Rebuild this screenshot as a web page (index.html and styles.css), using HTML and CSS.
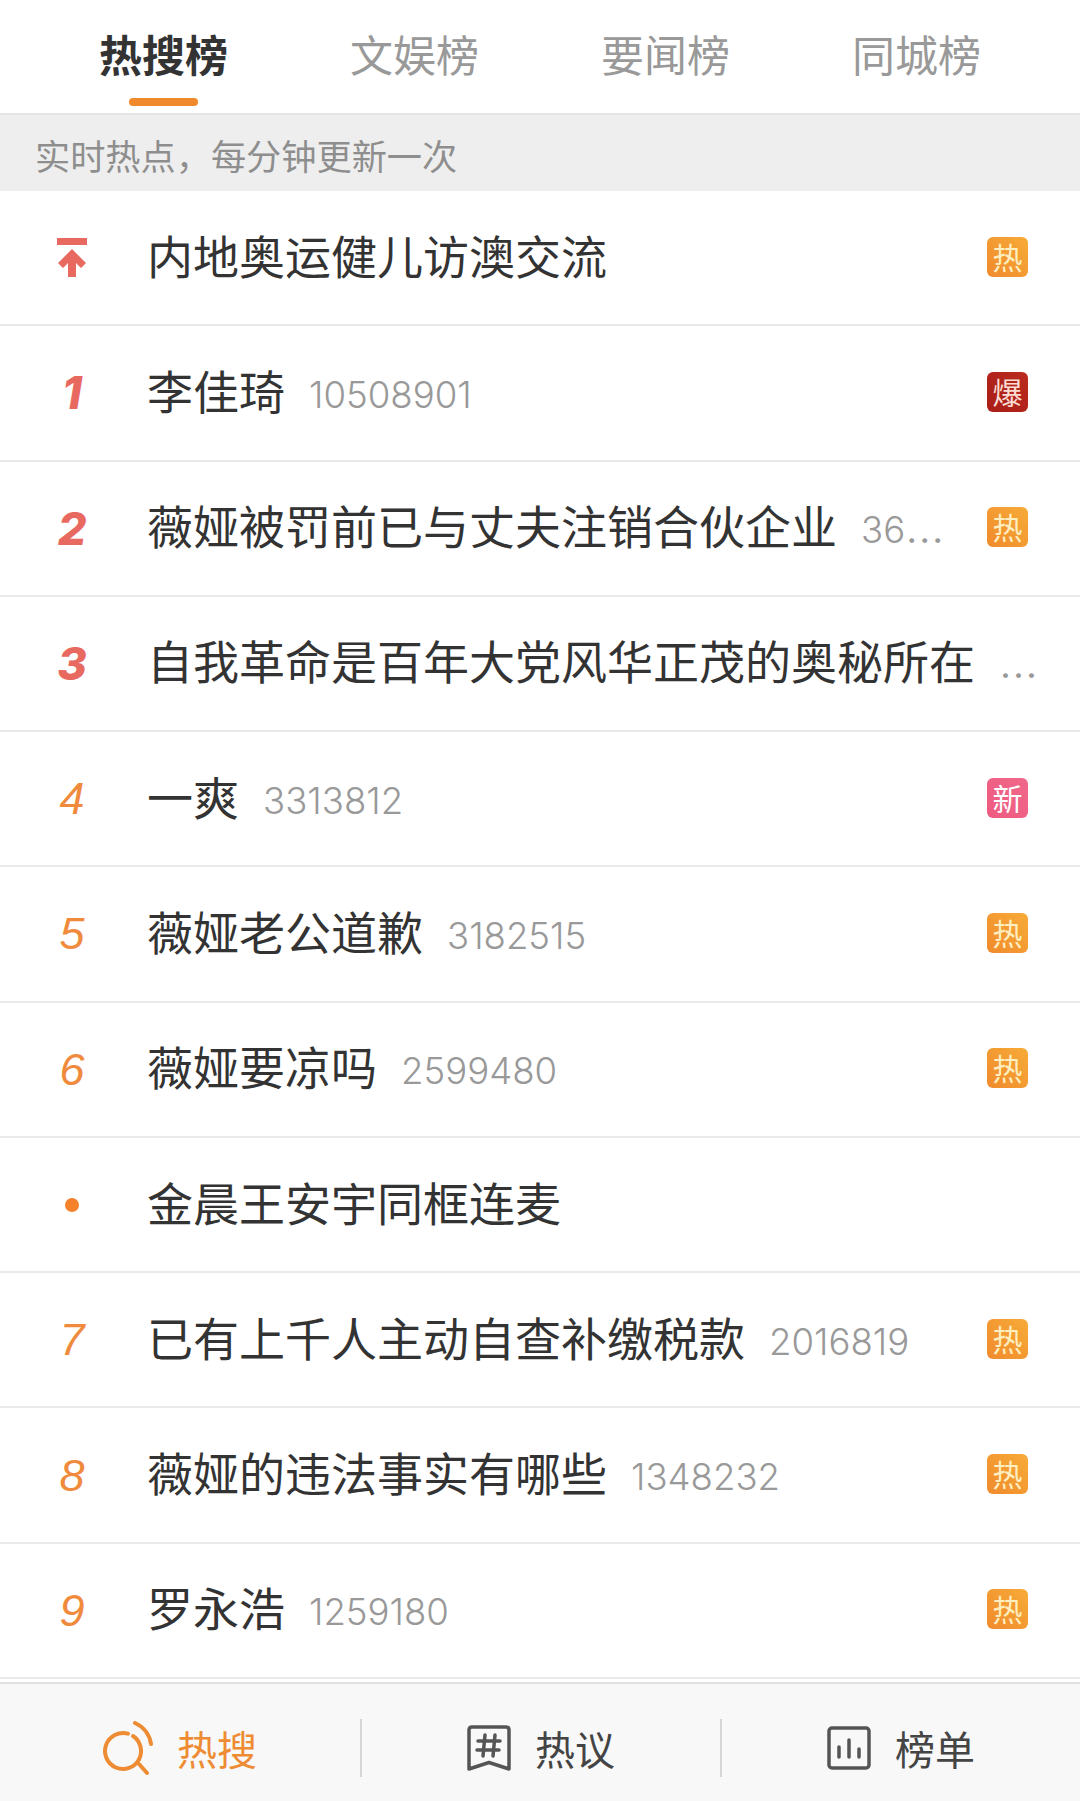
FILE: index.html
```html
<!doctype html>
<html lang="zh-CN">
    <head>
        <meta charset="UTF-8" />
        <meta name="viewport" content="width=device-width, initial-scale=1.0" />
        <title>热搜榜</title>
        <link rel="stylesheet" href="styles.css">
    </head>
    <body>
        <nav class="tabs">
            <a class="tab active">热搜榜</a>
            <a class="tab">文娱榜</a>
            <a class="tab">要闻榜</a>
            <a class="tab">同城榜</a>
        </nav>

        <div class="notice">实时热点，每分钟更新一次</div>

        <ul class="list">
            <li class="row">
                <span class="rank">
                    <svg class="pin" viewBox="0 0 30 39" width="30" height="39">
                        <rect x="0" y="0" width="30" height="7" fill="#e8695f"/>
                        <path d="M15 11 L29 25 L24 30 L19 25 V39 H11 V25 L6 30 L1 25 Z" fill="#e8695f"/>
                    </svg>
                </span>
                <span class="title">内地奥运健儿访澳交流</span>
                <span class="badge hot">热</span>
            </li>
            <li class="row">
                <span class="rank top">1</span>
                <span class="title">李佳琦</span>
                <span class="count">10508901</span>
                <span class="badge boom">爆</span>
            </li>
            <li class="row">
                <span class="rank top">2</span>
                <span class="title">薇娅被罚前已与丈夫注销合伙企业</span>
                <span class="count">36<span class="dots">…</span></span>
                <span class="badge hot">热</span>
            </li>
            <li class="row">
                <span class="rank top">3</span>
                <span class="title">自我革命是百年大党风华正茂的奥秘所在</span>
                <span class="count"><span class="dots">…</span></span>
            </li>
            <li class="row">
                <span class="rank">4</span>
                <span class="title">一爽</span>
                <span class="count">3313812</span>
                <span class="badge new">新</span>
            </li>
            <li class="row">
                <span class="rank">5</span>
                <span class="title">薇娅老公道歉</span>
                <span class="count">3182515</span>
                <span class="badge hot">热</span>
            </li>
            <li class="row">
                <span class="rank">6</span>
                <span class="title">薇娅要凉吗</span>
                <span class="count">2599480</span>
                <span class="badge hot">热</span>
            </li>
            <li class="row">
                <span class="rank"><i class="dot"></i></span>
                <span class="title">金晨王安宇同框连麦</span>
            </li>
            <li class="row">
                <span class="rank">7</span>
                <span class="title">已有上千人主动自查补缴税款</span>
                <span class="count">2016819</span>
                <span class="badge hot">热</span>
            </li>
            <li class="row">
                <span class="rank">8</span>
                <span class="title">薇娅的违法事实有哪些</span>
                <span class="count">1348232</span>
                <span class="badge hot">热</span>
            </li>
            <li class="row">
                <span class="rank">9</span>
                <span class="title">罗永浩</span>
                <span class="count">1259180</span>
                <span class="badge hot">热</span>
            </li>
        </ul>

        <footer class="footer">
            <a class="foot-item active">
                <svg viewBox="0 0 50 54" width="50" height="54" fill="none" stroke="#ee8c34" stroke-width="4" stroke-linecap="round">
                    <path d="M25 12.700 A18 18 0 1 0 36 38.300"/>
                    <path d="M30 15 A18 18 0 0 1 36 38.300"/>
                    <path d="M36 43 L44 52"/>
                    <path d="M32 2 A27 27 0 0 1 48 23"/>
                </svg>
                <span>热搜</span>
            </a>
            <a class="foot-item">
                <svg viewBox="0 0 44 46" width="44" height="46" fill="none" stroke="#555" stroke-width="3.500" stroke-linejoin="round" stroke-linecap="round">
                    <path d="M5 2 H39 Q42 2 42 5 V44 L22 37.500 L2 44 V5 Q2 2 5 2 Z"/>
                    <path d="M18 10 L16 31 M28 10 L26 31 M11 16 H33 M10 25 H32"/>
                </svg>
                <span>热议</span>
            </a>
            <a class="foot-item">
                <svg viewBox="0 0 44 44" width="44" height="44" fill="none" stroke="#555" stroke-width="3.500" stroke-linecap="round" stroke-linejoin="round">
                    <rect x="2" y="2" width="40" height="40" rx="3"/>
                    <path d="M12 21 V31 M22 14 V31 M32 23 V31"/>
                </svg>
                <span>榜单</span>
            </a>
        </footer>
    </body>
</html>
```

FILE: styles.css
```css
* {
    box-sizing: border-box;
    margin: 0;
    padding: 0;
}

body {
    font-family: 'Noto Sans CJK SC', 'Noto Sans', sans-serif;
    background-color: #fff;
    color: #333;
    width: 1080px;
    height: 1801px;
    display: flex;
    flex-direction: column;
    overflow: hidden;
}

.tabs {
    height: 115px;
    padding: 0 38px;
    display: grid;
    grid-template-columns: repeat(4, 1fr);
    border-bottom: 2px solid #e6e6e6;
}

.tab {
    position: relative;
    text-align: center;
    font-size: 43px;
    line-height: 106px;
    color: #999;
}

.tab.active {
    color: #333;
    font-weight: 700;
}

.tab.active::after {
    content: "";
    position: absolute;
    left: 50%;
    bottom: 7px;
    width: 69px;
    height: 8px;
    margin-left: -35px;
    border-radius: 4px;
    background-color: #f0892b;
}

.notice {
    height: 76px;
    padding: 4px 0 0 35px;
    background-color: #eee;
    color: #8e8e8e;
    font-size: 35.2px;
    line-height: 72px;
}

.list {
    flex: 1;
    margin-bottom: 3px;
    list-style: none;
    display: grid;
    grid-template-columns: 100%;
    grid-auto-rows: 1fr;
}

.row {
    display: flex;
    align-items: center;
    padding: 0 52px 0 48px;
    border-bottom: 2px solid #eaeaea;
}

.row > * {
    flex: none;
}

.rank {
    width: 48px;
    margin-right: 51px;
    display: flex;
    justify-content: center;
    font-family: 'Liberation Sans', sans-serif;
    font-style: italic;
    font-size: 45px;
    line-height: 1;
    color: #f08a3c;
}

.rank.top {
    font-family: Inter, sans-serif;
    font-weight: 800;
    font-size: 45px;
    color: #e8695f;
}

.dot {
    width: 14px;
    height: 14px;
    border-radius: 50%;
    background-color: #f5822a;
}

.title {
    padding-bottom: 8px;
    font-size: 46px;
    white-space: nowrap;
    font-weight: 400;
    color: #333;
}

.count {
    margin-left: 24px;
    padding-top: 4px;
    font-family: Inter, sans-serif;
    font-weight: 300;
    font-size: 36.6px;
    color: #999;
    white-space: nowrap;
}

.dots {
    font-size: 46px;
    line-height: 0;
}

.badge {
    margin-left: auto;
    margin-bottom: 2px;
    width: 41px;
    height: 40px;
    border-radius: 6px;
    text-align: center;
    font-size: 30px;
    line-height: 38px;
}

.hot {
    background: linear-gradient(45deg, #f08a2c, #f7ab38);
    color: #ffeec0;
}

.boom {
    background: linear-gradient(45deg, #a81d16, #bb2b20);
    color: #fbdcd2;
}

.new {
    background: linear-gradient(45deg, #ee5a80, #f0688a);
    color: #fff;
}

.footer {
    height: 119px;
    padding-top: 10px;
    display: grid;
    grid-template-columns: repeat(3, 1fr);
    align-items: center;
    background-color: #f8f8f8;
    border-top: 2px solid #e2e2e2;
}

.foot-item {
    height: 58px;
    display: flex;
    justify-content: center;
    align-items: center;
    gap: 24px;
    font-size: 40px;
    color: #444;
    border-left: 2px solid #d6d6d6;
}

.foot-item:first-child {
    border-left: none;
}

.foot-item.active {
    color: #ee8c34;
}
```
